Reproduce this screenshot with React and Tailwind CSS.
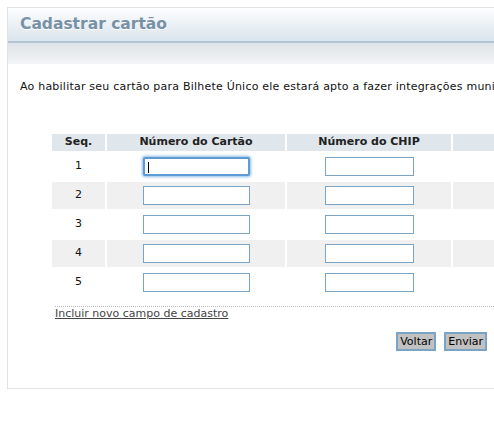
import React from "react";

const rows = [1, 2, 3, 4, 5];

function CardInput({ width, focused }) {
  if (focused) {
    // campo com foco: borda azul com brilho e cursor
    return (
      <div className={`relative mx-auto h-[19px] ${width} rounded-[2px] border-2 border-[#5d9bd3] bg-white shadow-[0_0_3px_1px_#8dbbe6]`}>
        <span className="absolute left-[3px] top-[3px] h-[11px] w-[1px] bg-black" />
      </div>
    );
  }
  return (
    <input
      type="text"
      className={`mx-auto block h-[19px] ${width} border border-[#7ba3c4] bg-white outline-none`}
    />
  );
}

export default function App() {
  return (
    <div className="h-[442px] w-[494px] overflow-hidden bg-white text-[11px] text-[#111] font-['DejaVu_Sans','Verdana',sans-serif]">
      <div className="ml-[7px] mt-[7px] h-[382px] w-[720px] border border-[#e2e2e2]">
        {/* Cabeçalho */}
        <div className="flex h-[33px] items-center bg-gradient-to-b from-[#fdfeff] to-[#dae4ec] px-[12px]">
          <h1 className="text-[15.5px] font-bold text-[#7891a6] [text-shadow:0_1px_0_#ffffff]">
            Cadastrar cartão
          </h1>
        </div>
        <div className="h-[2px] bg-[#b3c5d3]" />
        <div className="h-[21px] bg-gradient-to-b from-[#dde3e8] to-[#f4f5f6]" />

        <p className="mt-[16px] whitespace-nowrap pl-[12px] leading-[14px] tracking-[0.22px]">
          Ao habilitar seu cartão para Bilhete Único ele estará apto a fazer integrações municipais e metropolitanas.
        </p>

        <div className="ml-[42px] mt-[38px]">
          <table className="border-separate border-spacing-[2px]">
            <thead>
              <tr className="h-[17px] font-bold text-[#222]">
                <th className="w-[53px] bg-[#dfe6ec] p-0">Seq.</th>
                <th className="w-[178px] bg-[#dfe6ec] p-0">Número do Cartão</th>
                <th className="w-[164px] bg-[#dfe6ec] p-0">Número do CHIP</th>
                <th className="w-[126px] bg-[#dfe6ec] p-0">Excluir</th>
              </tr>
            </thead>
            <tbody>
              {rows.map((n) => {
                const bg = n % 2 === 0 ? "bg-[#f0f0f0]" : "bg-white";
                return (
                  <tr key={n} className="h-[27px]">
                    <td className={`${bg} p-0 text-center`}>{n}</td>
                    <td className={`${bg} p-0`}>
                      <CardInput width="w-[107px]" focused={n === 1} />
                    </td>
                    <td className={`${bg} p-0`}>
                      <CardInput width="w-[89px]" />
                    </td>
                    <td className={`${bg} p-0`} />
                  </tr>
                );
              })}
            </tbody>
          </table>
        </div>

        <div className="ml-[47px] mt-[8px] border-t border-dotted border-[#bbbbbb] leading-[13px]">
          <a href="#" className="text-[#444] underline">
            Incluir novo campo de cadastro
          </a>
        </div>

        <div className="mt-[12px] flex w-[479px] justify-end gap-[8px]">
          <button className="h-[19px] border-2 border-[#7ba3c4] bg-[#c1c1c1] px-[2px] leading-[15px] text-black">
            Voltar
          </button>
          <button className="h-[19px] border-2 border-[#7ba3c4] bg-[#c1c1c1] px-[2px] leading-[15px] text-black">
            Enviar
          </button>
        </div>
      </div>
    </div>
  );
}
